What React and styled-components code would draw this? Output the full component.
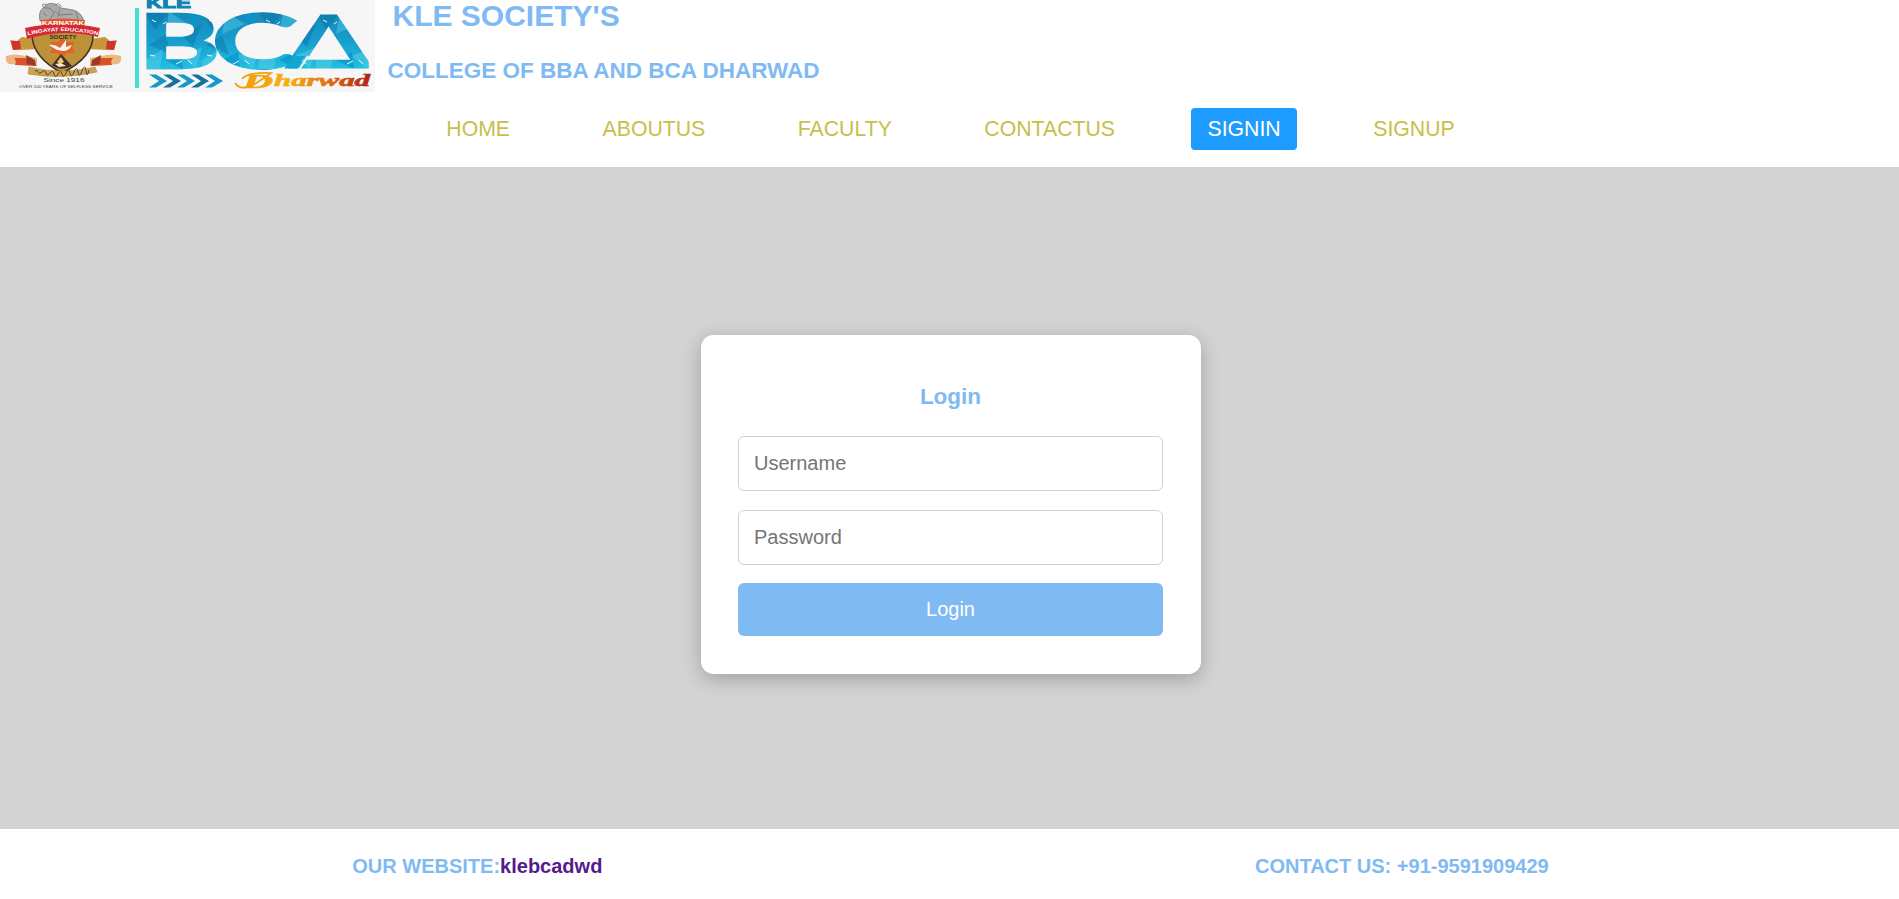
import React from "react";
import styled, { createGlobalStyle, css } from "styled-components";

const sky = "#7fbaf3";

const GlobalStyle = createGlobalStyle`
  * { box-sizing: border-box; }
  html, body, #root { height: 100%; margin: 0; }
  body {
    background: #fff;
    font-family: "Liberation Sans", Arial, sans-serif;
    overflow: hidden;
  }
`;

const Page = styled.div`
  display: flex;
  flex-direction: column;
  height: 100%;
`;

const Header = styled.header`
  display: flex;
  height: 92px;
  flex: none;
`;

const Titles = styled.div`
  display: flex;
  flex-direction: column;
  color: ${sky};
  padding-left: 12.5px;
`;

const Society = styled.h1`
  margin: -1px 0 0 5px;
  font-size: 30px;
  line-height: 34px;
  white-space: nowrap;
`;

const College = styled.h2`
  margin: 25px 0 0;
  font-size: 22.5px;
  line-height: 26px;
  white-space: nowrap;
`;

const Nav = styled.nav`
  display: flex;
  justify-content: center;
  gap: 60px;
  height: 75px;
  flex: none;
  padding: 16px 0 0 2px;
`;

const NavLink = styled.a`
  height: 42px;
  padding: 0 16.25px;
  border-radius: 4px;
  font-size: 21.25px;
  line-height: 42px;
  color: #c6c04a;
  text-decoration: none;
  ${(p) => p.$active && css`
    background: #1e9bff;
    color: #fff;
  `}
`;

const Main = styled.main`
  flex: 1;
  display: flex;
  justify-content: center;
  align-items: flex-start;
  padding: 168px 0 0 3px;
  background: #d3d3d3;
`;

const Card = styled.form`
  display: flex;
  flex-direction: column;
  width: 500px;
  height: 339px;
  padding: 49px 38px 38px 37px;
  border-radius: 12.5px;
  background: #fff;
  box-shadow: 0 5px 19px rgba(0, 0, 0, 0.24);
`;

const CardTitle = styled.h2`
  margin: 0 0 26px;
  color: ${sky};
  font-size: 22.5px;
  line-height: 26px;
  text-align: center;
`;

const Field = styled.input`
  height: 55px;
  margin: 0 0 19px;
  padding: 0 15px;
  border: 1px solid #d0d0d0;
  border-radius: 6px;
  font: 20px "Liberation Sans", Arial, sans-serif;
  outline: none;
  &::placeholder { color: #757575; }
`;

const Submit = styled.button`
  height: 53px;
  margin-top: -1px;
  border: 0;
  border-radius: 6px;
  background: ${sky};
  color: #fff;
  font: 20px "Liberation Sans", Arial, sans-serif;
`;

const Footer = styled.footer`
  display: flex;
  justify-content: space-around;
  height: 70px;
  flex: none;
  padding: 26px 24px 0 26px;
  color: ${sky};
  font-size: 20px;
  font-weight: bold;
  line-height: 23px;
`;

const SiteLink = styled.a`
  color: #551a8b;
  text-decoration: none;
`;

const LogoArt = styled.svg`
  display: block;
  width: 375px;
  height: 92px;
  flex: none;
  background: #f6f6f6;
`;

function Ribbon() {
  return (
    <g>
      <path d="M22 37 L37 39 L39 49 L20 50 L13 50 L10 40 L17 41Z" fill="#c8973b" />
      <path d="M11 41 L20 41 L21 49 L13 50Z" fill="#d3332e" />
      <path d="M6 56 Q14 53 26 56 L37 58 L37 66 L9 64 Q5 62 6 56Z" fill="#edb783" />
      <path d="M14 58 L31 58 L36 66 L15 65 Q17 61 14 58Z" fill="#d85328" />
      <path d="M26 55 L35 60 L36 66 L27 64Z" fill="#9c3c26" />
    </g>
  );
}

function Seal() {
  return (
    <g>
      <g fill="#aaa" stroke="#727272" strokeWidth=".8">
        <path d="M40 21 Q38 11 44 7 Q48 2 55 4 L61 8 L73 10 Q81 12 84 21Z" />
        <path d="M44 8 Q53 7 54 14 L49 20 M55 11 L59 15 L73 14 M60 9 L58 17 M76 11 L78 20 M43 13 L47 16" fill="none" />
        <path d="M43 7 Q41 2 47 5 M55 5 Q60 2 61 7" fill="none" />
      </g>
      <Ribbon />
      <g transform="translate(127 0) scale(-1 1)"><Ribbon /></g>
      <path d="M32 34 Q62 25 93 34 Q94 57 62 73 Q32 57 32 34Z" fill="#bd9137" stroke="#463322" strokeWidth="1.6" />
      <path d="M41 20 Q63 17 85 20 L84 27 L42 27Z" fill="#dd5b28" />
      <path d="M25 28 Q62 20 100 28 L98 37 Q62 28 27 39Z" fill="#d52937" />
      <path d="M62 38 L67 42 L75 42 L72 47 L75 53 L67 53 L62 58 L57 53 L50 53 L53 47 L50 42 L58 42Z" fill="#df6427" />
      <path d="M49 45 Q55 44 60 48 L66 40 L66 47 L72 45 Q69 51 63 51 L57 50Z" fill="#f8f4ec" />
      <path d="M61 54 L72 66 Q61 72 52 65Z" fill="#413026" />
      <path d="M61 57 L64 62 L60 64 L57 62Z" fill="#f5cb6a" />
      <path d="M55 64 L61 63 L66 66 L59 67Z" fill="#f4e8cf" />
      <path d="M29 67 Q62 75 95 67 L97 72 Q62 80 28 74Z" fill="#c9a253" stroke="#a37c31" strokeWidth=".5" />
      <path d="M35 71 q2 -2 3 1 t4 0 t4 1 t4 0 t4 1 t4 0 t4 0 t4 -1 t4 0 t4 -1 t4 0 t4 -1 t4 0 t3 -1" fill="none" stroke="#594123" strokeWidth="1" />
      <g fontFamily="Liberation Sans, sans-serif" textAnchor="middle">
        <text x="63" y="25" fontSize="5" fontWeight="bold" fill="#fff" textLength="42" lengthAdjust="spacingAndGlyphs">KARNATAK</text>
        <path id="sealArc" d="M27 35.5 Q62 26.5 99 35.5" fill="none" />
        <text fontSize="5" fontWeight="bold" fill="#fff"><textPath href="#sealArc" startOffset="50%" textLength="71" lengthAdjust="spacingAndGlyphs">LINGAYAT EDUCATION</textPath></text>
        <text x="63" y="38.8" fontSize="4.6" fontWeight="bold" fill="#342e20" textLength="27" lengthAdjust="spacingAndGlyphs">SOCIETY</text>
        <text x="64" y="82" fontSize="5.5" fill="#444" textLength="41" lengthAdjust="spacingAndGlyphs">Since 1916</text>
        <text x="66" y="87.5" fontSize="3.3" fill="#444" textLength="94" lengthAdjust="spacingAndGlyphs">OVER 100 YEARS OF SELFLESS SERVICE</text>
      </g>
    </g>
  );
}

const chevrons = [150, 164, 178, 192, 206];

function Logo() {
  return (
    <LogoArt viewBox="0 0 375 92" role="img" aria-label="KLE BCA Dharwad">
      <defs>
        <linearGradient id="ocean" x1="0" y1="0" x2="0" y2="1">
          <stop offset="0" stopColor="#1489b8" />
          <stop offset=".5" stopColor="#179dce" />
          <stop offset="1" stopColor="#24bfdf" />
        </linearGradient>
        <pattern id="facets" x="145" y="12" width="57" height="57" patternUnits="userSpaceOnUse">
          <rect width="57" height="57" fill="url(#ocean)" />
          <path d="M0 0 L24 0 L10 18Z M35 22 L57 12 L48 35Z M4 33 L20 23 L27 43Z" fill="#086d9f" opacity=".4" />
          <path d="M24 0 L43 12 L20 22Z M0 48 L18 37 L15 57 L0 57Z M36 44 L57 35 L51 57Z" fill="#5fd5ee" opacity=".4" />
          <path d="M43 0 L57 0 L48 16Z M20 48 L36 40 L38 57Z" fill="#0694cf" opacity=".7" />
          <path d="M7 8 l4 2 M18 12 l3 -2 M31 52 l6 -3 M43 48 l4 4 M5 43 l5 1" stroke="#e5f8fc" strokeWidth="1" />
        </pattern>
        <linearGradient id="flame" x1="234" x2="370" gradientUnits="userSpaceOnUse">
          <stop offset="0" stopColor="#f2990d" />
          <stop offset=".4" stopColor="#f5ae13" />
          <stop offset=".66" stopColor="#e77512" />
          <stop offset="1" stopColor="#a92314" />
        </linearGradient>
      </defs>
      <Seal />
      <rect x="135" y="8" width="4" height="80" fill="#40ded5" />
      <text x="146" y="7.5" fontFamily="Liberation Sans, sans-serif" fontWeight="bold" fontSize="15" fill="#0c83b4" stroke="#0c83b4" strokeWidth="1" textLength="45" lengthAdjust="spacingAndGlyphs">KLE</text>
      <g fontFamily="Lato, sans-serif" fontSize="71" fill="url(#facets)" stroke="url(#facets)" strokeWidth="4.5">
        <text x="139" y="66.5" textLength="80" lengthAdjust="spacingAndGlyphs">B</text>
        <text x="213" y="66.5" textLength="83" lengthAdjust="spacingAndGlyphs">C</text>
        <text x="287" y="67" fontFamily="Liberation Sans, sans-serif" fontSize="75" strokeWidth="3" textLength="83" lengthAdjust="spacingAndGlyphs">Δ</text>
      </g>
      <path d="M284 68.5 L297 68.5 L305 56 L293 56Z" fill="#13a5d4" />
      <path d="M299 70 L308 56" stroke="#f6f6f6" strokeWidth="2" />
      {chevrons.map((x, i) => (
        <path key={x} d={`M${x - 1} 74.5 h7 l11 6.5 l-11 6.5 h-7 l10 -6.5Z`} fill={i % 2 ? "#14729b" : "#1598c7"} />
      ))}
      <path d="M235 83 Q240 91 253 85 Q266 77 271 73 Q247 72 242 79" fill="none" stroke="#f2a013" strokeWidth="1.7" />
      <g fontFamily="Liberation Serif, serif" fontWeight="bold" fontStyle="italic" fill="url(#flame)" stroke="url(#flame)" strokeWidth=".6">
        <text x="243" y="87.5" fontSize="18" textLength="30" lengthAdjust="spacingAndGlyphs">D</text>
        <text x="274" y="86" fontSize="17" textLength="96" lengthAdjust="spacingAndGlyphs">harwad</text>
      </g>
    </LogoArt>
  );
}

const links = ["HOME", "ABOUTUS", "FACULTY", "CONTACTUS", "SIGNIN", "SIGNUP"];

export default function App() {
  return (
    <Page>
      <GlobalStyle />
      <Header>
        <Logo />
        <Titles>
          <Society>KLE SOCIETY'S</Society>
          <College>COLLEGE OF BBA AND BCA DHARWAD</College>
        </Titles>
      </Header>
      <Nav>
        {links.map((label) => (
          <NavLink key={label} $active={label === "SIGNIN"}>{label}</NavLink>
        ))}
      </Nav>
      <Main>
        <Card>
          <CardTitle>Login</CardTitle>
          <Field type="text" placeholder="Username" />
          <Field type="password" placeholder="Password" />
          <Submit type="button">Login</Submit>
        </Card>
      </Main>
      <Footer>
        <div>OUR WEBSITE:<SiteLink>klebcadwd</SiteLink></div>
        <div>CONTACT US: +91-9591909429</div>
      </Footer>
    </Page>
  );
}
